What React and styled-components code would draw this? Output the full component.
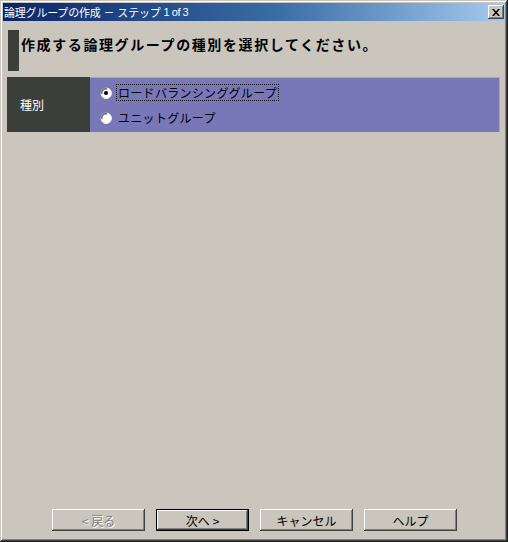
import React from "react";
import styled, { createGlobalStyle, css } from "styled-components";

const FACE = "#cac6be";

const Global = createGlobalStyle`
  html, body { margin: 0; padding: 0; background: ${FACE}; }
  body { font-family: "Noto Sans CJK JP", "Noto Sans", sans-serif; font-size: 12px; }
  * { box-sizing: border-box; }
`;

const Window = styled.div`
  width: 508px;
  height: 542px;
  padding: 3px;
  background: ${FACE};
  display: flex;
  flex-direction: column;
  box-shadow: inset -1px -1px #202020, inset 1px 1px ${FACE},
    inset -2px -2px #404040, inset 2px 2px #ffffff, inset -3px -3px #808080;
`;

const TitleBar = styled.div`
  height: 18px;
  flex: none;
  display: flex;
  align-items: center;
  justify-content: space-between;
  padding: 0 1px 0 1px;
  background: linear-gradient(to right, #0a246a 0%, #3a6ea5 55%, #a6caf0 100%);
  color: #ffffff;
  font-size: 11px;
  line-height: 18px;
  white-space: nowrap;
`;

const TitleText = styled.span`
  display: flex;
  align-items: center;
  gap: 3px;
  letter-spacing: -0.2px;
`;

const TitleNum = styled.span`
  font-family: "Liberation Sans", Arial, sans-serif;
  font-size: 11px;
  letter-spacing: -0.3px;
  word-spacing: -0.5px;
`;

const bevel = css`
  background: ${FACE};
  box-shadow: inset -1px -1px #404040, inset 1px 1px #ffffff,
    inset -2px -2px #808080, inset 2px 2px ${FACE};
`;

const CloseButton = styled.div`
  ${bevel};
  width: 16px;
  height: 14px;
  display: flex;
  align-items: center;
  justify-content: center;
`;

const Body = styled.div`
  flex: 1;
  display: flex;
  flex-direction: column;
  padding: 9px 4px 8px 4px;
`;

const Heading = styled.div`
  display: flex;
  height: 41px;
  margin-left: 1px;
`;

const HeadingBar = styled.div`
  width: 11px;
  flex: none;
  background: #3c3e3a;
`;

const HeadingText = styled.h1`
  margin: 0 0 0 2px;
  padding-top: 5px;
  font-size: 14px;
  font-weight: bold;
  letter-spacing: 1.6px;
  line-height: 18px;
  color: #000000;
  white-space: nowrap;
`;

const Table = styled.div`
  margin-top: 6px;
  margin-right: 1px;
  height: 55px;
  display: flex;
`;

const LabelCell = styled.div`
  width: 83px;
  flex: none;
  background: #3c3e3a;
  color: #ffffff;
  display: flex;
  align-items: center;
  padding-left: 13px;
  font-size: 12px;
`;

const ValueCell = styled.div`
  flex: 1;
  background: #7878b8;
  border-top: 1px solid #a4a4d0;
  border-right: 1px solid #a4a4d0;
  padding: 2px 0 2px 10px;
  display: flex;
  flex-direction: column;
`;

const RadioRow = styled.label`
  height: 25px;
  display: flex;
  align-items: center;
  gap: 4px;
  color: #000000;
  font-size: 12px;
`;

const RadioLabel = styled.span`
  padding: 0 1px;
  line-height: 15px;
  letter-spacing: 0.3px;
  border: 1px dotted ${(p) => (p.$focus ? "#000000" : "transparent")};
`;

const Spacer = styled.div`
  flex: 1;
`;

const ButtonRow = styled.div`
  display: flex;
  justify-content: center;
  gap: 11px;
  padding-left: 1px;
`;

const Button = styled.div`
  ${bevel};
  width: 93px;
  height: 22px;
  display: flex;
  align-items: center;
  justify-content: center;
  gap: 3px;
  font-size: 12px;
  color: ${(p) => (p.$disabled ? "#808080" : "#000000")};
  text-shadow: ${(p) => (p.$disabled ? "1px 1px #ffffff" : "none")};
  ${(p) =>
    p.$default &&
    css`
      box-shadow: inset 0 0 0 1px #000000, inset -2px -2px #404040,
        inset 2px 2px #ffffff, inset -3px -3px #808080;
    `}
`;

function Radio({ checked }) {
  return (
    <svg width="12" height="12" viewBox="0 0 12 12" style={{ flex: "none" }}>
      <circle cx="6" cy="6" r="5.5" fill="#ffffff" />
      <path d="M4 11.2 A5.5 5.5 0 0 0 11.2 4" stroke="#e8e8e8" strokeWidth="1" fill="none" />
      <path d="M0.8 6.5 A5.4 5.4 0 0 1 6.5 0.8" stroke="#808080" strokeWidth="1.2" fill="none" />
      <path d="M1.9 7.2 A4.4 4.4 0 0 1 7.2 1.9" stroke="#404040" strokeWidth="1" fill="none" />
      {checked && <circle cx="6" cy="6" r="2" fill="#000000" />}
    </svg>
  );
}

export default function App() {
  return (
    <>
      <Global />
      <Window>
        <TitleBar>
          <TitleText>
            <span>論理グループの作成</span>
            <span>－</span>
            <span>ステップ</span>
            <TitleNum>1 of 3</TitleNum>
          </TitleText>
          <CloseButton>
            <svg width="8" height="7" viewBox="0 0 8 7">
              <path d="M0 0 L2 0 L4 2.5 L6 0 L8 0 L5 3.5 L8 7 L6 7 L4 4.5 L2 7 L0 7 L3 3.5 Z" fill="#000000" />
            </svg>
          </CloseButton>
        </TitleBar>
        <Body>
          <Heading>
            <HeadingBar />
            <HeadingText>作成する論理グループの種別を選択してください。</HeadingText>
          </Heading>
          <Table>
            <LabelCell>種別</LabelCell>
            <ValueCell>
              <RadioRow>
                <Radio checked />
                <RadioLabel $focus>ロードバランシンググループ</RadioLabel>
              </RadioRow>
              <RadioRow>
                <Radio />
                <RadioLabel>ユニットグループ</RadioLabel>
              </RadioRow>
            </ValueCell>
          </Table>
          <Spacer />
          <ButtonRow>
            <Button $disabled>
              <span>&lt;</span>
              <span>戻る</span>
            </Button>
            <Button $default>
              <span>次へ</span>
              <span>&gt;</span>
            </Button>
            <Button>キャンセル</Button>
            <Button>ヘルプ</Button>
          </ButtonRow>
        </Body>
      </Window>
    </>
  );
}
